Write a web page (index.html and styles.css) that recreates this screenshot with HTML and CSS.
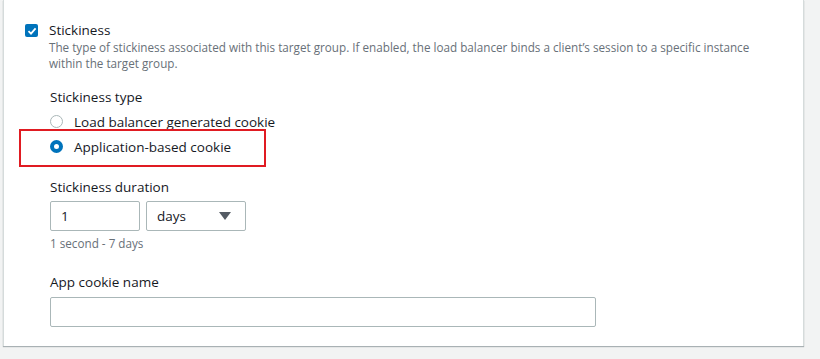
FILE: index.html
```html
<!DOCTYPE html>
<html lang="en">
<head>
  <meta charset="UTF-8" />
  <title>Stickiness</title>
  <link rel="stylesheet" href="styles.css">
</head>
<body>

<div class="card">
  <div class="check-row">
    <span class="checkbox">
      <svg width="10" height="10" viewBox="0 0 10 10"><path d="M1.5 5.2 L4 7.6 L8.6 2.4" fill="none" stroke="#fff" stroke-width="1.8"/></svg>
    </span>
    <div>
      <div class="check-label">Stickiness</div>
      <div class="desc">The type of stickiness associated with this target group. If enabled, the load balancer binds a client’s session to a specific instance within the target group.</div>
    </div>
  </div>

  <div class="field type">
    <div class="label">Stickiness type</div>
    <div class="radio-row">
      <span class="radio"></span>
      <span>Load balancer generated cookie</span>
    </div>
    <div class="radio-row highlight">
      <span class="radio checked"></span>
      <span>Application-based cookie</span>
    </div>
  </div>

  <div class="field duration">
    <div class="label">Stickiness duration</div>
    <div class="duration-row">
      <div class="input small">1</div>
      <div class="input select">days <span class="caret"></span></div>
    </div>
    <div class="hint">1 second - 7 days</div>
  </div>

  <div class="field cookie">
    <div class="label">App cookie name</div>
    <div class="input wide"></div>
  </div>
</div>

</body>
</html>
```

FILE: styles.css
```css
body {
  margin: 0;
  background: #f2f3f3;
  font-family: 'Open Sans', sans-serif;
  color: #16191f;
  height: 359px;
  overflow: hidden;
}

.card {
  margin-left: 3px;
  width: 801px;
  height: 346px;
  background: #fff;
  border-left: 1px solid #d5dbdb;
  border-right: 1px solid #d5dbdb;
  box-shadow: 0 1px 1px 0 rgba(0, 28, 36, 0.3);
  box-sizing: border-box;
  padding: 22px 0 0 21px;
}

.check-row {
  display: flex;
  gap: 11px;
}

.checkbox {
  width: 13px;
  height: 13px;
  margin-top: 2px;
  background: #0073bb;
  border-radius: 2px;
  display: flex;
  align-items: center;
  justify-content: center;
  flex-shrink: 0;
}

.check-label {
  font-size: 13.5px;
  line-height: 17px;
}

.desc {
  font-size: 11.7px;
  line-height: 16px;
  color: #687078;
  width: 710px;
}

.field {
  padding-left: 25px;
}

.label {
  font-size: 13.5px;
  line-height: 18px;
}

.type {
  margin-top: 17px;
}

.radio-row {
  display: flex;
  align-items: center;
  gap: 11px;
  font-size: 13.5px;
  height: 25px;
}

.label + .radio-row {
  margin-top: 3px;
}

.highlight {
  position: relative;
}

.highlight::before {
  content: "";
  position: absolute;
  left: -31px;
  top: -5px;
  width: 247px;
  height: 38px;
  border: 2px solid #e01b22;
  box-sizing: border-box;
}

.radio {
  width: 13px;
  height: 13px;
  border: 1px solid #aab7b8;
  border-radius: 50%;
  box-sizing: border-box;
  flex-shrink: 0;
}

.radio.checked {
  border: 4px solid #0073bb;
  background: #fff;
}

.duration {
  margin-top: 19px;
}

.duration-row {
  display: flex;
  gap: 6px;
  margin-top: 5px;
}

.input {
  height: 30px;
  border: 1px solid #aab7b8;
  border-radius: 2px;
  box-sizing: border-box;
  font-size: 13.5px;
  display: flex;
  align-items: center;
  padding-left: 10px;
}

.small {
  width: 90px;
}

.select {
  width: 100px;
  justify-content: space-between;
  padding-right: 14px;
}

.caret {
  width: 0;
  height: 0;
  border-left: 6px solid transparent;
  border-right: 6px solid transparent;
  border-top: 8px solid #545b64;
}

.hint {
  font-size: 11.7px;
  color: #687078;
  margin-top: 4px;
  line-height: 16px;
}

.cookie {
  margin-top: 22px;
}

.cookie .input {
  margin-top: 6px;
}

.wide {
  width: 546px;
}
```
